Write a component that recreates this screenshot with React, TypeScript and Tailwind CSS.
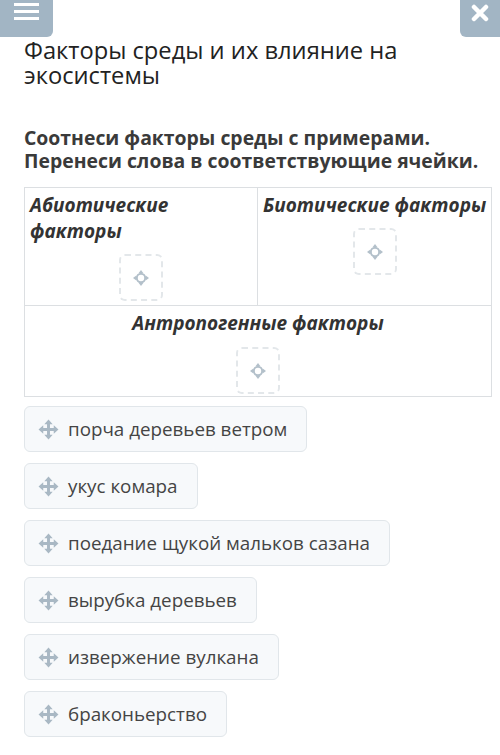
const font = { fontFamily: '"Open Sans", "Noto Sans", sans-serif' };

const MoveIcon = () => (
  <svg width="21" height="21" viewBox="0 0 20 20" className="shrink-0">
    <g fill="#a9b8c4">
      <path d="M10 0.5 L14 5 L11.4 5 L11.4 8.6 L15 8.6 L15 6 L19.5 10 L15 14 L15 11.4 L11.4 11.4 L11.4 15 L14 15 L10 19.5 L6 15 L8.6 15 L8.6 11.4 L5 11.4 L5 14 L0.5 10 L5 6 L5 8.6 L8.6 8.6 L8.6 5 L6 5 Z" />
    </g>
  </svg>
);

const DropIcon = () => (
  <svg width="18" height="18" viewBox="0 0 18 18">
    <circle cx="9" cy="9" r="4.2" fill="none" stroke="#b3c0ca" strokeWidth="2" />
    <g fill="#b3c0ca">
      <path d="M9 1 L11.3 4 L6.7 4 Z" />
      <path d="M9 17 L11.3 14 L6.7 14 Z" />
      <path d="M1 9 L4 6.7 L4 11.3 Z" />
      <path d="M17 9 L14 6.7 L14 11.3 Z" />
    </g>
  </svg>
);

const DropZone = () => (
  <div className="w-[44px] h-[47px] rounded-md border-2 border-dashed border-[#e3e7ea] flex items-center justify-center">
    <DropIcon />
  </div>
);

const items = [
  'порча деревьев ветром',
  'укус комара',
  'поедание щукой мальков сазана',
  'вырубка деревьев',
  'извержение вулкана',
  'браконьерство',
];

export default function App() {
  return (
    <div className="w-[500px] h-[755px] bg-white overflow-hidden" style={font}>
      <div className="flex justify-between h-[37px]">
        <div className="w-[53px] h-[37px] bg-[#a2b5c4] rounded-br-md flex flex-col items-center gap-[4px] pt-[3px]">
          <div className="w-[25px] h-[3px] bg-white" />
          <div className="w-[25px] h-[3px] bg-white" />
          <div className="w-[25px] h-[3px] bg-white" />
        </div>
        <div className="w-[40px] h-[37px] bg-[#a2b5c4] rounded-bl-md flex items-start justify-center pt-[4px]">
          <svg width="18" height="18" viewBox="0 0 18 18">
            <path d="M3 3 L15 15 M15 3 L3 15" stroke="white" strokeWidth="4.5" strokeLinecap="round" />
          </svg>
        </div>
      </div>

      <div className="px-6">
        <h1 className="text-[23.7px] leading-[25px] text-[#222] mt-[1px] pr-[70px]">
          Факторы среды и их влияние на экосистемы
        </h1>

        <p className="mt-[38px] w-[460px] text-[19.4px] leading-[23px] font-bold text-[#3a3a3a]">
          Соотнеси факторы среды с примерами. Перенеси слова в соответствующие ячейки.
        </p>

        <div className="mt-[15px] w-[468px] border border-[#dcdfe2]">
          <div className="grid grid-cols-[233px_1fr] border-b border-[#dcdfe2]">
            <div className="border-r border-[#dcdfe2] px-[5px] pt-[4px] pb-[4px] flex flex-col h-[117px]">
              <div className="text-[19px] leading-[26px] font-bold italic text-[#333]">Абиотические факторы</div>
              <div className="flex justify-center mt-[10px]">
                <DropZone />
              </div>
            </div>
            <div className="px-[5px] pt-[4px] flex flex-col">
              <div className="text-[19px] leading-[26px] font-bold italic text-[#333] whitespace-nowrap">Биотические факторы</div>
              <div className="flex justify-center mt-[10px]">
                <DropZone />
              </div>
            </div>
          </div>
          <div className="h-[90px] pt-[4px] flex flex-col items-center">
            <div className="text-[19px] leading-[26px] font-bold italic text-[#333]">Антропогенные факторы</div>
            <div className="mt-[11px]">
              <DropZone />
            </div>
          </div>
        </div>

        <div className="mt-[9px] flex flex-col items-start gap-[11px]">
          {items.map((t) => (
            <div
              key={t}
              className="h-[46px] flex items-center gap-[9px] pl-[13px] pr-[19px] bg-[#f7f9fb] border border-[#e1e6ea] rounded-md"
            >
              <MoveIcon />
              <span className="text-[18.8px] text-[#444] whitespace-nowrap">{t}</span>
            </div>
          ))}
        </div>
      </div>
    </div>
  );
}
